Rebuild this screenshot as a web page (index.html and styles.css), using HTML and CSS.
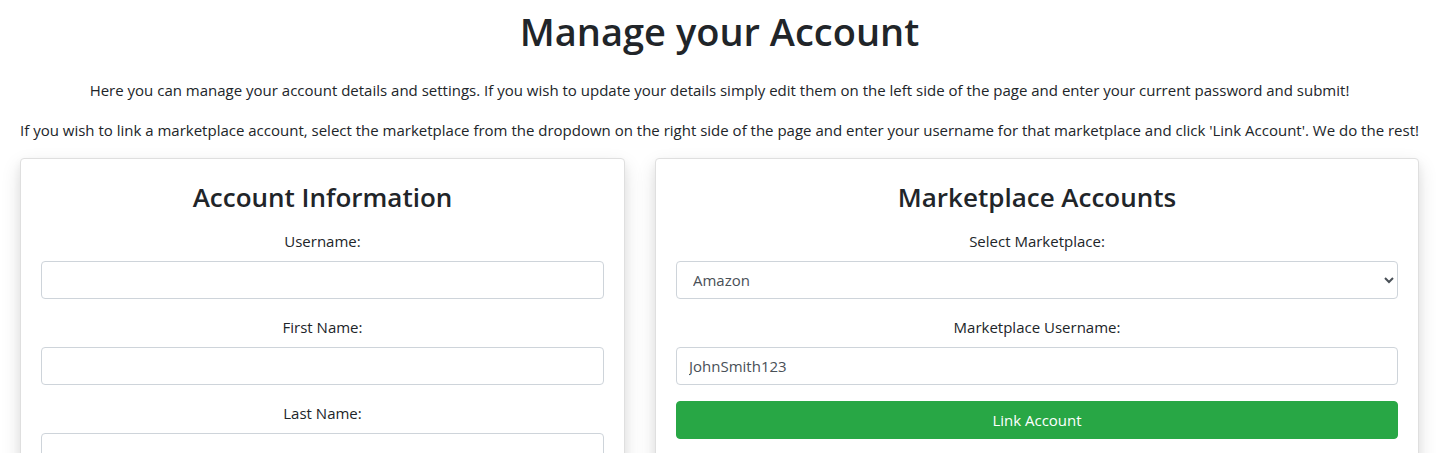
FILE: index.html
```html
<!DOCTYPE html>
<html lang="en">
<head>
<meta charset="utf-8">
<title>Manage your Account</title>
<link rel="stylesheet" href="styles.css">
</head>
<body>
<header class="intro">
  <h1>Manage your Account</h1>
  <p>Here you can manage your account details and settings. If you wish to update your details simply edit them on the left side of the page and enter your current password and submit!</p>
  <p>If you wish to link a marketplace account, select the marketplace from the dropdown on the right side of the page and enter your username for that marketplace and click 'Link Account'. We do the rest!</p>
</header>
<main class="panels">
  <form class="card">
    <h2>Account Information</h2>
    <div class="field">
      <label for="username">Username:</label>
      <input class="control" id="username" type="text">
    </div>
    <div class="field">
      <label for="first-name">First Name:</label>
      <input class="control" id="first-name" type="text">
    </div>
    <div class="field">
      <label for="last-name">Last Name:</label>
      <input class="control" id="last-name" type="text">
    </div>
  </form>
  <form class="card">
    <h2>Marketplace Accounts</h2>
    <div class="field">
      <label for="marketplace">Select Marketplace:</label>
      <select class="control" id="marketplace"><option>Amazon</option></select>
    </div>
    <div class="field">
      <label for="market-user">Marketplace Username:</label>
      <input class="control" id="market-user" type="text" placeholder="JohnSmith123">
    </div>
    <button class="submit" type="button">Link Account</button>
  </form>
</main>
</body>
</html>
```
FILE: styles.css
```css
*, *::before, *::after { box-sizing: border-box; }
html { scrollbar-width: none; }
body {
  margin: 0;
  background: #fff;
  color: #212529;
  font-family: "Segoe UI", "Open Sans", "Noto Sans", sans-serif;
  font-size: 15px;
  line-height: 24px;
  text-align: center;
}
h1, h2, p { margin: 0; }
.intro {
  display: flex;
  flex-direction: column;
  gap: 16px;
  padding: 8px 17px 16px 20px;
}
.intro p { white-space: nowrap; align-self: center; }
h1 { font-size: 38px; font-weight: 600; line-height: 46px; margin-bottom: 8px; }
h2 { font-size: 26px; font-weight: 600; line-height: 36px; margin-bottom: 14px; }
.panels {
  display: grid;
  grid-template-columns: 605fr 764fr;
  gap: 30px;
  padding: 0 17px 24px 20px;
}
.card {
  padding: 20px;
  border: 1px solid #dfdfdf;
  border-radius: 4px;
  background: #fff;
  box-shadow: 0 4px 8px rgba(0, 0, 0, 0.06), 0 8px 20px rgba(0, 0, 0, 0.12);
}
.field { margin-bottom: 16px; }
.field label { display: block; margin-bottom: 8px; }
.control {
  display: block;
  width: 100%;
  height: 38px;
  padding: 6px 12px;
  border: 1px solid #ced4da;
  border-radius: 4px;
  background: #fff;
  color: #495057;
  font: inherit;
}
.control::placeholder { color: #495057; opacity: 1; }
.submit {
  width: 100%;
  height: 38px;
  border: 1px solid #28a745;
  border-radius: 4px;
  background: #28a745;
  color: #fff;
  font: inherit;
}
```
